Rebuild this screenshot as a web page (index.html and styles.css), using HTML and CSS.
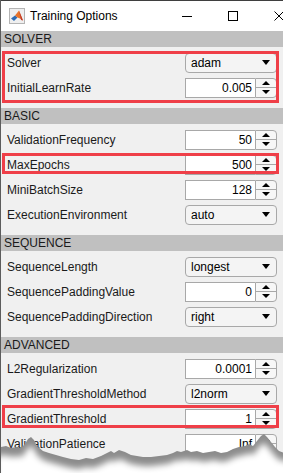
FILE: index.html
```html
<!DOCTYPE html>
<html lang="en">
<head>
    <meta charset="UTF-8">
    <meta name="viewport" content="width=device-width, initial-scale=1.0">
    <title>Training Options</title>
    <link rel="stylesheet" href="styles.css">
</head>
<body>
<div class="window">
    <div class="titlebar">
        <svg class="app-icon" viewBox="0 0 16 16">
            <rect x="0.5" y="0.5" width="15" height="15" fill="#efefef" stroke="#b4b4b4"/>
            <polygon points="2,10.5 6,7.5 8.5,9.5 5,13" fill="#2d6cb5"/>
            <polygon points="6,7.5 10,2.5 14,12.5 11,10.5 8.5,9.5" fill="#e8742a"/>
            <polygon points="10,2.5 14,12.5 12,12" fill="#c0392b"/>
        </svg>
        <span class="title">Training Options</span>
        <div class="win-btns">
            <div class="win-btn"><span class="min-glyph"></span></div>
            <div class="win-btn"><span class="max-glyph"></span></div>
            <div class="win-btn">
                <svg class="close-glyph" viewBox="0 0 10 10">
                    <path d="M0.5 0.5 L9.5 9.5 M9.5 0.5 L0.5 9.5" stroke="#000" stroke-width="1"/>
                </svg>
            </div>
        </div>
    </div>

    <section class="group">
        <div class="group-head">SOLVER</div>
        <div class="group-body">
            <div class="hl hl-solver">
                <div class="row">
                    <span class="label">Solver</span>
                    <div class="select"><span>adam</span><i class="caret"></i></div>
                </div>
                <div class="row">
                    <span class="label">InitialLearnRate</span>
                    <div class="spinner"><span class="spin-value">0.005</span><span class="spin-btns"><i class="up"></i><i class="down"></i></span></div>
                </div>
            </div>
        </div>
    </section>

    <section class="group">
        <div class="group-head">BASIC</div>
        <div class="group-body">
            <div class="row">
                <span class="label">ValidationFrequency</span>
                <div class="spinner"><span class="spin-value">50</span><span class="spin-btns"><i class="up"></i><i class="down"></i></span></div>
            </div>
            <div class="hl hl-epochs">
                <div class="row">
                    <span class="label">MaxEpochs</span>
                    <div class="spinner"><span class="spin-value">500</span><span class="spin-btns"><i class="up"></i><i class="down"></i></span></div>
                </div>
            </div>
            <div class="row">
                <span class="label">MiniBatchSize</span>
                <div class="spinner"><span class="spin-value">128</span><span class="spin-btns"><i class="up"></i><i class="down"></i></span></div>
            </div>
            <div class="row">
                <span class="label">ExecutionEnvironment</span>
                <div class="select"><span>auto</span><i class="caret"></i></div>
            </div>
        </div>
    </section>

    <section class="group">
        <div class="group-head">SEQUENCE</div>
        <div class="group-body">
            <div class="row">
                <span class="label">SequenceLength</span>
                <div class="select"><span>longest</span><i class="caret"></i></div>
            </div>
            <div class="row">
                <span class="label">SequencePaddingValue</span>
                <div class="spinner"><span class="spin-value">0</span><span class="spin-btns"><i class="up"></i><i class="down"></i></span></div>
            </div>
            <div class="row">
                <span class="label">SequencePaddingDirection</span>
                <div class="select"><span>right</span><i class="caret"></i></div>
            </div>
        </div>
    </section>

    <section class="group">
        <div class="group-head">ADVANCED</div>
        <div class="group-body">
            <div class="row">
                <span class="label">L2Regularization</span>
                <div class="spinner"><span class="spin-value">0.0001</span><span class="spin-btns"><i class="up"></i><i class="down"></i></span></div>
            </div>
            <div class="row">
                <span class="label">GradientThresholdMethod</span>
                <div class="select"><span>l2norm</span><i class="caret"></i></div>
            </div>
            <div class="hl hl-grad">
                <div class="row">
                    <span class="label">GradientThreshold</span>
                    <div class="spinner"><span class="spin-value">1</span><span class="spin-btns"><i class="up"></i><i class="down"></i></span></div>
                </div>
            </div>
            <div class="row">
                <span class="label">ValidationPatience</span>
                <div class="spinner"><span class="spin-value">Inf</span><span class="spin-btns"><i class="up"></i><i class="down"></i></span></div>
            </div>
        </div>
    </section>

    <!-- torn paper edge over the bottom of the window -->
    <svg class="tear" viewBox="0 0 283 45" width="283" height="45">
        <defs>
            <filter id="soft" x="-10%" y="-50%" width="120%" height="200%">
                <feGaussianBlur stdDeviation="3"/>
            </filter>
        </defs>
        <path fill="#8c8c8c" d="M0 19 L5 18 L10 20 L16 19 L20 20 L24 16 L27 11 L30 9 L33 12 L36 18 L42 23 L48 25 L55 27 L62 29 L70 31 L78 32 L85 30 L92 31 L100 28 L106 25 L110 23 L113 25 L118 22 L124 24 L130 27 L136 28 L142 29 L150 29 L158 28 L166 27 L172 25 L176 23 L180 24 L186 22 L190 24 L196 23 L202 25 L208 24 L214 23 L220 25 L226 24 L232 21 L238 19 L244 18 L248 16 L252 18 L256 13 L260 8 L263 6 L266 9 L270 14 L274 19 L278 23 L283 25 L283 45 L0 45 Z"/>
        <path fill="#fff" filter="url(#soft)" transform="translate(0 9)" d="M-5 19 L5 18 L10 20 L16 19 L20 20 L24 16 L27 11 L30 9 L33 12 L36 18 L42 23 L48 25 L55 27 L62 29 L70 31 L78 32 L85 30 L92 31 L100 28 L106 25 L110 23 L113 25 L118 22 L124 24 L130 27 L136 28 L142 29 L150 29 L158 28 L166 27 L172 25 L176 23 L180 24 L186 22 L190 24 L196 23 L202 25 L208 24 L214 23 L220 25 L226 24 L232 21 L238 19 L244 18 L248 16 L252 18 L256 13 L260 8 L263 6 L266 9 L270 14 L274 19 L278 23 L290 25 L290 60 L-5 60 Z"/>
    </svg>
</div>
</body>
</html>
```

FILE: styles.css
```css
html, body {
    margin: 0; padding: 0;
    background: #fff;
    font-family: "Liberation Sans", Arial, sans-serif;
    font-size: 12px;
    color: #1a1a1a;
}

.window {
    position: relative;
    width: 283px;
    height: 473px;
    box-sizing: border-box;
    border-left: 1px solid #5c5c5c;
    background: #f0f0f0;
    overflow: hidden;
}

/* title bar */
.titlebar {
    display: flex;
    align-items: center;
    height: 30px;
    border-top: 1px solid #3f3f3f;
    background: #fff;
    padding-left: 8px;
}

.app-icon {
    width: 16px;
    height: 16px;
    margin-right: 5px;
}

.title {
    color: #000;
}

.win-btns {
    display: flex;
    margin-left: auto;
    margin-right: -19px;
}

.win-btn {
    width: 46px;
    height: 30px;
    display: flex;
    align-items: center;
    justify-content: center;
}

.min-glyph {
    width: 10px;
    height: 1px;
    background: #000;
}

.max-glyph {
    width: 10px;
    height: 10px;
    box-sizing: border-box;
    border: 1px solid #000;
}

.close-glyph {
    width: 10px;
    height: 10px;
}

/* groups */
.group-head {
    height: 16px;
    line-height: 16px;
    padding-left: 3px;
    background: #c0c0c0;
    color: #1a1a1a;
}

.group-body {
    padding: 3px 0 8px;
}

.row {
    display: flex;
    align-items: center;
    justify-content: space-between;
    height: 25px;
    padding: 0 6px;
}

.label {
    color: #1a1a1a;
}

/* dropdown */
.select {
    display: flex;
    align-items: center;
    justify-content: space-between;
    width: 92px;
    height: 20px;
    box-sizing: border-box;
    padding: 0 6px 0 5px;
    border: 1px solid #a8a8a8;
    border-radius: 4px;
    background: #f4f4f4;
    color: #000;
}

.caret {
    width: 0; height: 0;
    border-left: 4px solid transparent;
    border-right: 4px solid transparent;
    border-top: 5px solid #000;
}

/* numeric spinner */
.spinner {
    display: flex;
    width: 92px;
    height: 20px;
}

.spin-value {
    flex: 1;
    box-sizing: border-box;
    border: 1px solid #a8a8a8;
    border-right: none;
    background: #fff;
    text-align: right;
    padding-right: 3px;
    line-height: 18px;
    color: #000;
}

.spin-btns {
    display: flex;
    flex-direction: column;
    width: 22px;
    box-sizing: border-box;
    border: 1px solid #a8a8a8;
    border-radius: 0 4px 4px 0;
    background: #f7f7f7;
}

.spin-btns i {
    flex: 1;
    display: flex;
    align-items: center;
    justify-content: center;
}

.spin-btns .down {
    border-top: 1px solid #a8a8a8;
}

.spin-btns .up::before,
.spin-btns .down::before {
    content: '';
    width: 0; height: 0;
    border-left: 4px solid transparent;
    border-right: 4px solid transparent;
}

.spin-btns .up::before {
    border-bottom: 4px solid #000;
}

.spin-btns .down::before {
    border-top: 4px solid #000;
}

/* red highlight boxes */
.hl {
    position: relative;
}

.hl::after {
    content: '';
    position: absolute;
    left: 1px;
    right: 4px;
    border: 3px solid #ef3f48;
    pointer-events: none;
}

.hl-solver::after { top: 1px; bottom: -3px; }
.hl-epochs::after { top: 1px; bottom: 3px; }
.hl-grad::after { top: -1px; bottom: 3px; }

.tear {
    position: absolute;
    left: 0;
    bottom: 0;
    display: block;
}
```
